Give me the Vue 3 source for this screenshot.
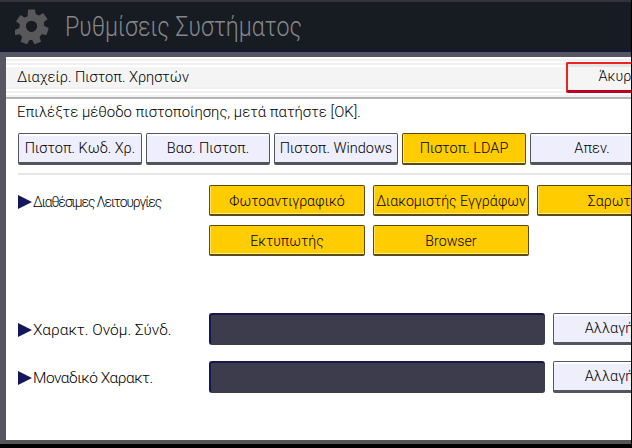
<template>
  <div class="screen">
    <header class="head">
      <svg class="gear" width="35" height="36" viewBox="0 0 36 36">
        <path fill="#58585a" fill-rule="evenodd" d="M14.500 1h7l1 5 3.200 1.300 4.300-2.700 4.500 6.400-3.900 3.200.5 3.800 4.600 2-2.200 7.200-5-.6-2.300 2.900 1.700 4.600-6.800 2.700-2.400-4.300h-2.800l-2.400 4.300-6.800-2.700 1.700-4.600-2.300-2.900-5 .6L.9 22l4.600-2 .5-3.800L2.100 13l4.500-6.400 4.300 2.700L14 8zM18 12.500a5.800 5.800 0 1 0 0 11.600 5.800 5.800 0 0 0 0-11.600z"/>
      </svg>
      <h1 class="head-title">Ρυθμίσεις Συστήματος</h1>
    </header>
    <main class="panel">
      <div class="title-bar">
        <span>Διαχείρ. Πιστοπ. Χρηστών</span>
        <button class="btn cancel">Άκυρο</button>
      </div>
      <p class="message">Επιλέξτε μέθοδο πιστοποίησης, μετά πατήστε [OK].</p>
      <div class="methods">
        <button v-for="m in methods" :key="m" class="btn" :class="{ on: m === active }">{{ m }}</button>
      </div>
      <div class="row functions">
        <div class="label tight-a"><i class="arrow"></i>Διαθέσιμες Λειτουργίες</div>
        <div class="func-grid">
          <button v-for="f in functions" :key="f" class="btn on">{{ f }}</button>
        </div>
      </div>
      <div v-for="f in fields" :key="f.text" class="row field">
        <div class="label" :class="f.cls"><i class="arrow"></i>{{ f.text }}</div>
        <div class="input"></div>
        <button class="btn change">Αλλαγή</button>
      </div>
    </main>
  </div>
</template>

<script setup>
const active = 'Πιστοπ. LDAP'
const methods = ['Πιστοπ. Κωδ. Χρ.', 'Βασ. Πιστοπ.', 'Πιστοπ. Windows', 'Πιστοπ. LDAP', 'Απεν.']
const functions = ['Φωτοαντιγραφικό', 'Διακομιστής Εγγράφων', 'Σαρωτής', 'Εκτυπωτής', 'Browser']
const fields = [
  { text: 'Χαρακτ. Ονόμ. Σύνδ.', cls: '' },
  { text: 'Μοναδικό Χαρακτ.', cls: 'tight-b' }
]
</script>

<style>
html, body { margin: 0; background: #000; overflow: hidden; }
</style>

<style scoped>
.screen {
  width: 631px;
  height: 448px;
  overflow: hidden;
  background: #000;
  font-family: Roboto, "Liberation Sans", sans-serif;
  font-weight: 300;
  color: #000;
}
.head {
  box-sizing: border-box;
  border-top: 2px solid #33343a;
  border-bottom: 2px solid #14183a;
  height: 52px;
  background: #171b22;
  display: flex;
  align-items: center;
  padding-left: 14px;
  gap: 16px;
}
.gear { flex: none; }
.head-title {
  margin: 0;
  font-size: 28px;
  font-weight: 300;
  color: #85878a;
  white-space: nowrap;
  transform: scaleX(0.83);
  transform-origin: left center;
}
.panel {
  width: 680px;
  height: 392px;
  box-sizing: border-box;
  background: #fff;
  border: solid #565660;
  border-width: 5px 0 4px 6px;
  border-bottom-color: #555;
}
.title-bar {
  height: 42px;
  box-sizing: border-box;
  padding-left: 11px;
  background:
    linear-gradient(transparent 10px, #f4f4f4 10px 30px, transparent 30px),
    repeating-linear-gradient(#fff 0 2px, #f0f0f0 2px 4px);
  border-bottom: 2px solid #b4b4b4;
  display: flex;
  align-items: center;
  justify-content: space-between;
  font-size: 14.6px;
}
.message {
  margin: 0;
  padding: 4px 0 0 11px;
  height: 34px;
  box-sizing: border-box;
  font-size: 14.9px;
  line-height: 18px;
}
.btn {
  box-sizing: border-box;
  font-family: inherit;
  font-weight: 300;
  font-size: 14.5px;
  padding: 0;
  color: #000;
  white-space: nowrap;
  background: #eeeefc;
  border: 1px solid #55555f;
  border-bottom: 3px solid #55555f;
  border-radius: 2px;
  box-shadow: inset 0 2px 0 #fff;
}
.btn.on {
  background: #ffcc00;
  border-color: #5c4a10;
  border-bottom-width: 2px;
  box-shadow: inset 0 -1px 0 #ffee88, inset 1px 0 0 #ffe566;
}
.cancel {
  width: 114px;
  height: 31px;
  padding-right: 8px;
  background: #f5f5f5;
  border: 2px solid #ee2222;
  border-bottom: 3px solid #bb0022;
  box-shadow: inset 0 3px 0 #e6e6e6;
  text-align: center;
}
.methods {
  display: flex;
  gap: 4px;
  padding: 0 0 8px 12px;
}
.methods .btn {
  width: 124px;
  height: 32px;
  flex: none;
}
.row {
  margin-left: 12px;
  display: flex;
}
.functions {
  border-top: 2px solid #e6e6e6;
  padding-top: 10px;
  height: 140px;
  box-sizing: border-box;
}
.label {
  width: 191px;
  flex: none;
  font-size: 15.5px;
  display: flex;
  align-items: center;
  height: 34px;
}
.label.tight-a {
  font-size: 14px;
  letter-spacing: -1.1px;
}
.label.tight-b {
  letter-spacing: -0.5px;
}
.arrow {
  width: 0;
  height: 0;
  border-left: 14px solid #14185a;
  border-top: 7px solid transparent;
  border-bottom: 7px solid transparent;
  margin-right: 1px;
}
.func-grid {
  display: grid;
  grid-template-columns: 156px 156px 160px;
  grid-auto-rows: 31px;
  gap: 9px 8px;
}
.func-grid .btn {
  padding-top: 2px;
  font-size: 14.2px;
}
.field {
  height: 48px;
  box-sizing: border-box;
}
.input {
  width: 336px;
  height: 32px;
  box-sizing: border-box;
  flex: none;
  background: #3c3c4c;
  border: 1px solid #3c3c4c;
  border-top: 2px solid #14184a;
  border-left: 2px solid #14184a;
  border-radius: 3px;
}
.change {
  width: 112px;
  height: 32px;
  margin-left: 8px;
  flex: none;
}
</style>
